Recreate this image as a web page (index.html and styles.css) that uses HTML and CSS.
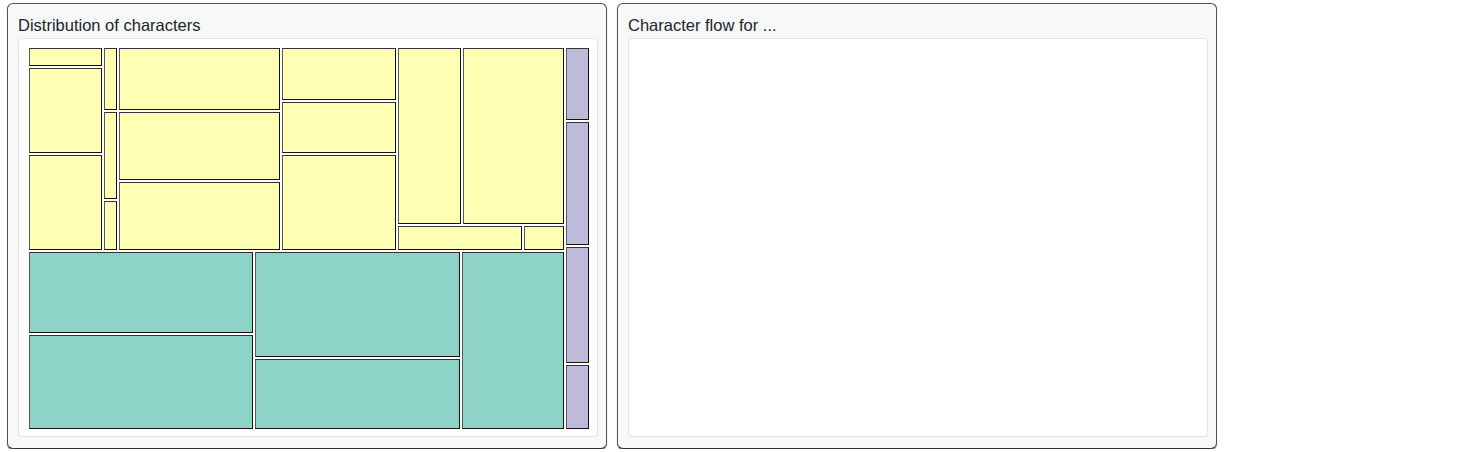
FILE: index.html
```html
<!DOCTYPE html>
<html>
<head>
<meta charset="utf-8">
<link rel="stylesheet" href="styles.css">
</head>
<body>
<div class="page">
  <section class="panel">
    <h2 class="title">Distribution of characters</h2>
    <div class="box">
      <div class="treemap">
        <div class="main">
          <div class="band-y">
            <div class="col" style="width:73px">
              <div class="c y" style="height:18px"></div>
              <div class="c y" style="height:85px"></div>
              <div class="c y fill"></div>
            </div>
            <div class="col" style="width:13px">
              <div class="c y" style="height:62px"></div>
              <div class="c y" style="height:87px"></div>
              <div class="c y fill"></div>
            </div>
            <div class="col" style="width:161px">
              <div class="c y" style="height:62px"></div>
              <div class="c y" style="height:68px"></div>
              <div class="c y fill"></div>
            </div>
            <div class="col" style="width:114px">
              <div class="c y" style="height:52px"></div>
              <div class="c y" style="height:51px"></div>
              <div class="c y fill"></div>
            </div>
            <div class="col fill">
              <div class="row" style="height:176px">
                <div class="c y" style="width:63px"></div>
                <div class="c y fill"></div>
              </div>
              <div class="row fill">
                <div class="c y" style="width:124px"></div>
                <div class="c y fill"></div>
              </div>
            </div>
          </div>
          <div class="band-t">
            <div class="col" style="width:224px">
              <div class="c t" style="height:81px"></div>
              <div class="c t fill"></div>
            </div>
            <div class="col" style="width:205px">
              <div class="c t" style="height:105px"></div>
              <div class="c t fill"></div>
            </div>
            <div class="c t fill"></div>
          </div>
        </div>
        <div class="col fill">
          <div class="c p" style="height:72px"></div>
          <div class="c p" style="height:123px"></div>
          <div class="c p" style="height:116px"></div>
          <div class="c p fill"></div>
        </div>
      </div>
    </div>
  </section>
  <section class="panel">
    <h2 class="title">Character flow for ...</h2>
    <div class="box"></div>
  </section>
</div>
</body>
</html>
```
FILE: styles.css
```css
html, body {
  margin: 0;
  padding: 0;
  background: #ffffff;
}
body {
  font-family: "Liberation Sans", Arial, sans-serif;
  color: #212529;
}
.page {
  display: flex;
  gap: 10px;
  padding: 3px 0 0 7px;
}
.panel {
  box-sizing: border-box;
  width: 600px;
  height: 446px;
  padding: 11px 8px 0 10px;
  background: #f7f8fa;
  border: 1px solid #555;
  border-bottom-color: #333;
  border-radius: 6px;
  box-shadow: 0 1px 1px rgba(0, 0, 0, 0.5);
}
.title {
  margin: 0 0 3px 0;
  font-size: 16.5px;
  font-weight: normal;
  line-height: 20px;
  height: 20px;
}
.box {
  box-sizing: border-box;
  height: 399px;
  background: #ffffff;
  border: 1px solid #e2e3e5;
  border-radius: 4px;
  padding: 9px 0 0 10px;
}
.treemap {
  display: flex;
  gap: 2px;
  width: 560px;
  height: 381px;
}
.main {
  display: flex;
  flex-direction: column;
  gap: 2px;
  width: 535px;
}
.band-y {
  display: flex;
  gap: 2px;
  height: 202px;
}
.band-t {
  display: flex;
  gap: 2px;
  flex: 1;
}
.col {
  display: flex;
  flex-direction: column;
  gap: 2px;
  flex: none;
}
.row {
  display: flex;
  gap: 2px;
  flex: none;
}
.fill {
  flex: 1 1 0;
  min-width: 0;
  min-height: 0;
}
.c {
  box-sizing: border-box;
  flex-shrink: 0;
  border: 1px solid #111;
  border-left-color: #5a5a5a;
  border-top-color: #333;
}
.c.fill {
  flex: 1 1 0;
}
.y { background: #ffffb3; }
.t { background: #8dd3c7; }
.p { background: #bebada; }
```
